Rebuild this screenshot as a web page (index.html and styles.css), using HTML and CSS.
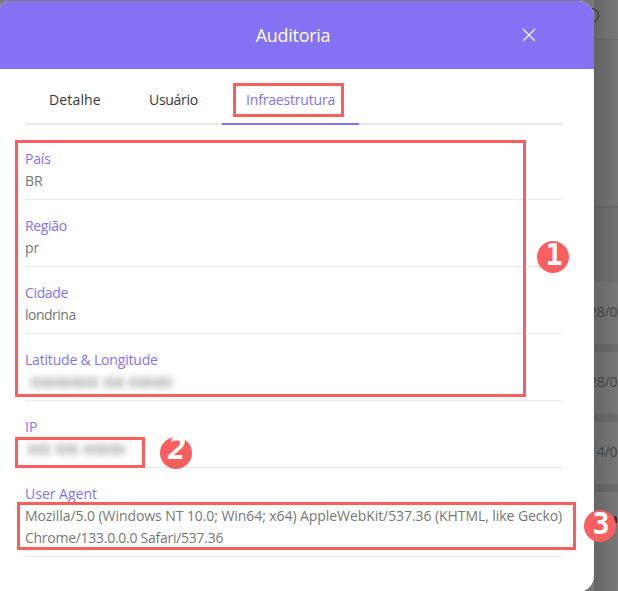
FILE: index.html
```html
<!DOCTYPE html>
<html lang="pt-BR">
<head>
<meta charset="utf-8">
<title>Auditoria</title>
<link rel="stylesheet" href="styles.css">
</head>
<body>
<div class="screen">
  <div class="backdrop">
    <div class="bg-top"></div>
    <div class="bg-filter"></div>
    <div class="bg-head"></div>
    <div class="bg-row">28/0</div>
    <div class="bg-row">28/0</div>
    <div class="bg-row">14/0</div>
    <div class="bg-row bg-last"><i class="bg-mark"></i></div>
    <i class="bg-ring"></i>
  </div>
  <div class="backdrop-shade"></div>
  <section class="modal">
    <header class="modal-header">
      <h1 class="title">Auditoria</h1>
      <svg class="close" viewBox="0 0 14 14" width="14" height="14"><path d="M1 1 13 13M13 1 1 13" fill="none" stroke="#e9e5fd" stroke-width="1.5"/></svg>
    </header>
    <nav class="tabs">
      <span class="tab tab-detail"><b class="t-detail">Detalhe</b></span>
      <span class="tab tab-user"><b class="t-user">Usuário</b></span>
      <span class="tab tab-infra"><b class="t-infra">Infraestrutura</b></span>
    </nav>
    <dl class="fields">
      <div class="field"><dt class="l-country">País</dt><dd>BR</dd></div>
      <div class="field"><dt class="l-region">Região</dt><dd>pr</dd></div>
      <div class="field"><dt class="l-city">Cidade</dt><dd class="v-city">londrina</dd></div>
      <div class="field"><dt class="l-lat">Latitude &amp; Longitude</dt><dd><span class="redacted geo"><i></i><i></i><i></i></span></dd></div>
      <div class="field"><dt>IP</dt><dd><span class="redacted ip"><i></i><i></i><i></i></span></dd></div>
      <div class="field"><dt>User Agent</dt><dd><span class="agent-1">Mozilla/5.0 (Windows NT 10.0; Win64; x64) AppleWebKit/537.36 (KHTML, like Gecko)</span><br><span class="agent-2">Chrome/133.0.0.0 Safari/537.36</span></dd></div>
    </dl>
  </section>
  <div class="mark mark-tab"></div>
  <div class="mark mark-place"></div>
  <div class="mark mark-ip"></div>
  <div class="mark mark-agent"></div>
  <div class="badge badge-1"><span>1</span></div>
  <div class="badge badge-2"><span>2</span></div>
  <div class="badge badge-3"><span>3</span></div>
</div>
</body>
</html>
```
FILE: styles.css
```css
* { box-sizing: border-box; }
body { margin: 0; font-family: "Open Sans", "Noto Sans", sans-serif; }
.screen { position: relative; width: 618px; height: 591px; overflow: hidden; background: #7a7a7a; }
.backdrop { position: absolute; inset: 0; display: flex; flex-direction: column; color: #484848; }
.bg-top { height: 40px; border-bottom: 1px solid #6f6f6f; }
.bg-filter { height: 166px; background: #777; }
.bg-head { height: 76px; background: #747474; border-top: 2px solid #6c6c6c; }
.bg-row { height: 70px; border-bottom: 8px solid #6f6f6f; padding: 20px 0 0 589px; font-size: 14px; line-height: 20px; letter-spacing: -0.2px; white-space: nowrap; }
.bg-last { height: 99px; border: 0; }
.bg-mark { display: block; width: 3px; height: 7px; margin: 4px 0 0 25px; background: #333; border-radius: 0 3px 0 0; }
.bg-ring { position: absolute; left: 584px; top: 8px; width: 15px; height: 15px; border: 1px solid #282828; border-radius: 50%; }
.backdrop-shade { position: absolute; left: 594px; top: 0; width: 24px; height: 100%; background: linear-gradient(90deg, rgba(0,0,0,.17), rgba(0,0,0,.02)); }
.modal { position: relative; margin-top: 1px; width: 594px; height: 591px; border-radius: 8px 16px 16px 0; background: #fff; overflow: hidden; }
.modal-header { height: 68px; background: #8571f4; display: grid; grid-template-columns: 1fr auto 1fr; align-items: center; padding-right: 8px; }
.title { grid-column: 2; margin: 0; color: #fff; font-size: 18px; font-weight: 400; letter-spacing: -.3px; line-height: 24px; }
.close { justify-self: end; margin-right: 50px; }
.tabs { display: flex; height: 56px; margin: 0 32px 0 25px; border-bottom: 2px solid #e9e9e9; }
.tab { height: 56px; padding: 21px 0 0 24px; font-size: 14px; line-height: 20px; color: #363640; white-space: nowrap; }
.tab b { font-weight: 500; }
.tab-detail { width: 100px; }
.tab-user { width: 97px; }
.tab-infra { width: 137px; color: #8571f4; border-bottom: 2px solid #8571f4; }
.t-detail { letter-spacing: .15px; }
.t-user { letter-spacing: -.3px; }
.t-infra { letter-spacing: -.18px; }
.fields { margin: 8px 32px 0 25px; font-size: 14px; line-height: 22px; }
.field { padding: 15px 0 7px; border-bottom: 1px solid #e9e9e9; }
.field dt { color: #8571f4; }
.field dd { margin: 0; min-height: 22px; color: #777; white-space: nowrap; }
.l-country { letter-spacing: -.2px; }
.l-region, .l-city { letter-spacing: -.35px; }
.v-city { letter-spacing: -.5px; }
.l-lat { letter-spacing: -.19px; }
.agent-1 { letter-spacing: -.072px; }
.agent-2 { letter-spacing: -.27px; }
.redacted { display: flex; height: 22px; align-items: center; gap: 5px; filter: blur(3px); }
.redacted i { height: 11px; background: repeating-linear-gradient(90deg, #c9c9c9 0 6px, #e2e2e2 6px 8px, #cfcfcf 8px 13px, #dadada 13px 15px); }
.geo { padding-left: 6px; }
.geo i:nth-child(1) { width: 68px; }
.geo i:nth-child(2) { width: 20px; }
.geo i:nth-child(3) { width: 44px; }
.ip { padding-left: 3px; }
.ip i:nth-child(1) { width: 23px; }
.ip i:nth-child(2) { width: 23px; }
.ip i:nth-child(3) { width: 42px; }
.mark { position: absolute; border: 3px solid #fa5f60; }
.mark-tab { left: 233px; top: 83px; width: 111px; height: 34px; }
.mark-place { left: 15px; top: 140px; width: 511px; height: 257px; }
.mark-ip { left: 15px; top: 437px; width: 130px; height: 31px; }
.mark-agent { left: 17px; top: 502px; width: 559px; height: 48px; }
.badge { position: absolute; width: 32px; height: 32px; border-radius: 50%; background: #fa5f60; color: #fff; display: flex; justify-content: center; font: bold 30px/32px "DejaVu Sans Mono", monospace; }
.badge-1 { left: 537px; top: 241px; }
.badge-2 { left: 160px; top: 437px; }
.badge-3 { left: 584px; top: 510px; }
.badge span { transform: translate(1px, -2px) scaleX(.95); }
.badge-2 span { transform: translate(1px, -4px) skewX(-10deg); }
```
